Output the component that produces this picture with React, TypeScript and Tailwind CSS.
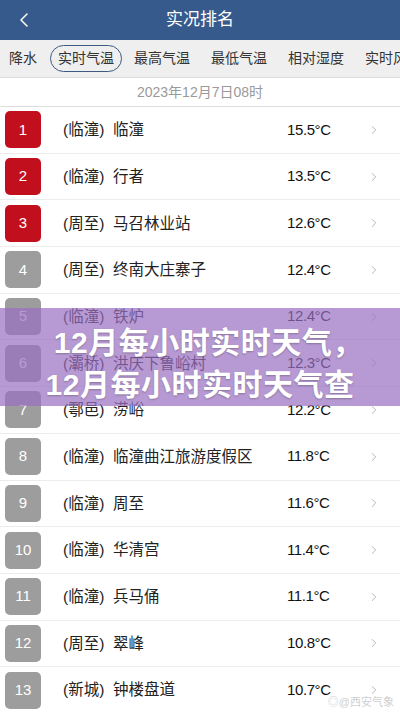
import { ChevronLeft, ChevronRight } from 'lucide-react'

interface Station {
  rank: number
  county: string
  name: string
  temp: string
}

const stations: Station[] = [
  { rank: 1, county: '临潼', name: '临潼', temp: '15.5°C' },
  { rank: 2, county: '临潼', name: '行者', temp: '13.5°C' },
  { rank: 3, county: '周至', name: '马召林业站', temp: '12.6°C' },
  { rank: 4, county: '周至', name: '终南大庄寨子', temp: '12.4°C' },
  { rank: 5, county: '临潼', name: '铁炉', temp: '12.4°C' },
  { rank: 6, county: '灞桥', name: '洪庆下鲁峪村', temp: '12.3°C' },
  { rank: 7, county: '鄠邑', name: '涝峪', temp: '12.2°C' },
  { rank: 8, county: '临潼', name: '临潼曲江旅游度假区', temp: '11.8°C' },
  { rank: 9, county: '临潼', name: '周至', temp: '11.6°C' },
  { rank: 10, county: '临潼', name: '华清宫', temp: '11.4°C' },
  { rank: 11, county: '临潼', name: '兵马俑', temp: '11.1°C' },
  { rank: 12, county: '周至', name: '翠峰', temp: '10.8°C' },
  { rank: 13, county: '新城', name: '钟楼盘道', temp: '10.7°C' },
]

const tabs = ['降水', '实时气温', '最高气温', '最低气温', '相对湿度', '实时风速']

function Row({ s }: { s: Station }) {
  return (
    <div className="flex items-center h-[46.7px] border-b border-[#ececec] bg-white">
      <div
        className={`ml-[5px] w-[36px] h-[37px] rounded-[5px] flex items-center justify-center text-white text-[15px] ${
          s.rank <= 3 ? 'bg-[#c20f1d]' : 'bg-[#9d9d9d]'
        }`}
      >
        {s.rank}
      </div>
      <div className="ml-[22px] w-[224px] text-[15.5px] text-[#222] whitespace-nowrap">
        ({s.county})&nbsp; {s.name}
      </div>
      <div className="w-[80px] text-[15px] tracking-[-0.4px] text-[#111]">{s.temp}</div>
      <ChevronRight className="w-[14px] h-[14px] text-[#aaa]" strokeWidth={1.5} />
    </div>
  )
}

export default function App() {
  return (
    <div
      className="relative w-[400px] h-[713px] overflow-hidden bg-white"
      style={{ fontFamily: '"Liberation Sans", "Noto Sans CJK SC", sans-serif' }}
    >
      <header className="relative h-[40px] bg-[#365a8b] flex items-center justify-center">
        <ChevronLeft className="absolute left-[12px] top-[8px] w-[24px] h-[24px] text-white" strokeWidth={1.5} />
        <h1 className="text-white text-[17px]">实况排名</h1>
      </header>

      <nav className="h-[38px] bg-[#efefef] border-b border-[#dcdcdc] flex items-center whitespace-nowrap overflow-hidden">
        {tabs.map((t, i) => (
          <div key={t} className={`shrink-0 text-[14px] text-[#333] ${i === 0 ? 'pl-[9px] pr-[12px]' : 'px-[1px] mr-[19px]'}`}>
            {i === 1 ? (
              <span className="inline-block border border-[#3d5b82] rounded-full px-[7px] py-[2px] -mr-[9px]">{t}</span>
            ) : (
              t
            )}
          </div>
        ))}
      </nav>

      <div className="h-[29px] border-b border-[#dedede] flex items-center justify-center text-[14px] text-[#9a9a9a]">
        2023年12月7日08时
      </div>

      <div>
        {stations.map(s => (
          <Row key={s.rank} s={s} />
        ))}
      </div>

      <div className="absolute left-0 right-0 top-[308px] h-[98px] bg-[#996fc0]/70 flex flex-col items-center justify-center pt-[14px]">
        <p className="text-white font-bold text-[30px] leading-[42px] tracking-[0.5px] [text-shadow:0_1px_2px_rgba(0,0,0,0.25)]">
          12月每小时实时天气<span className="inline-block w-[14px] overflow-visible">，</span>
        </p>
        <p className="text-white font-bold text-[30px] leading-[42px] tracking-[0.5px] [text-shadow:0_1px_2px_rgba(0,0,0,0.25)]">
          12月每小时实时天气查
        </p>
      </div>

      <div className="absolute right-[6px] bottom-[3px] text-[11px] text-[#cfcfcf]">◎@西安气象</div>
    </div>
  )
}
